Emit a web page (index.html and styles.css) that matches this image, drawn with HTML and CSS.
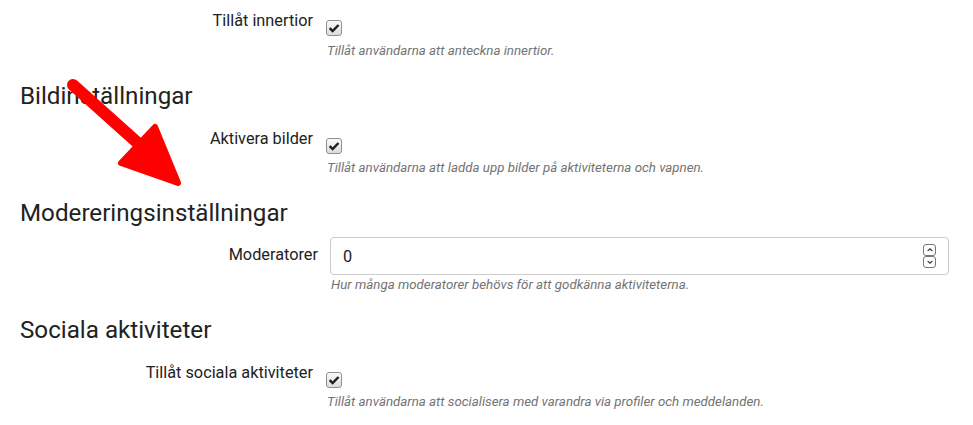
FILE: index.html
```html
<!DOCTYPE html>
<html lang="sv">
<head>
<meta charset="utf-8">
<link rel="stylesheet" href="styles.css">
</head>
<body>
<div class="page">
  <div class="row row-check first">
    <div class="label">Tillåt innertior</div>
    <div class="control">
      <span class="check"><svg viewBox="0 0 16 16" width="12" height="12"><path d="M2.2 8.2 L6.2 12 L14 4" fill="none" stroke="#1e1e1e" stroke-width="3.2"/></svg></span>
      <div class="help">Tillåt användarna att anteckna innertior.</div>
    </div>
  </div>

  <h2 class="heading">Bildinställningar</h2>
  <div class="row row-check">
    <div class="label">Aktivera bilder</div>
    <div class="control">
      <span class="check"><svg viewBox="0 0 16 16" width="12" height="12"><path d="M2.2 8.2 L6.2 12 L14 4" fill="none" stroke="#1e1e1e" stroke-width="3.2"/></svg></span>
      <div class="help">Tillåt användarna att ladda upp bilder på aktiviteterna och vapnen.</div>
    </div>
  </div>

  <h2 class="heading">Modereringsinställningar</h2>
  <div class="row row-input">
    <div class="label">Moderatorer</div>
    <div class="control">
      <div class="input">
        <span class="value">0</span>
        <span class="spin">
          <span class="spin-btn"><svg viewBox="0 0 10 10" width="8" height="8"><path d="M2 6.5 L5 3.5 L8 6.5" fill="none" stroke="#333" stroke-width="1.4"/></svg></span>
          <span class="spin-btn"><svg viewBox="0 0 10 10" width="8" height="8"><path d="M2 3.5 L5 6.5 L8 3.5" fill="none" stroke="#333" stroke-width="1.4"/></svg></span>
        </span>
      </div>
      <div class="help">Hur många moderatorer behövs för att godkänna aktiviteterna.</div>
    </div>
  </div>

  <h2 class="heading">Sociala aktiviteter</h2>
  <div class="row row-check">
    <div class="label">Tillåt sociala aktiviteter</div>
    <div class="control">
      <span class="check"><svg viewBox="0 0 16 16" width="12" height="12"><path d="M2.2 8.2 L6.2 12 L14 4" fill="none" stroke="#1e1e1e" stroke-width="3.2"/></svg></span>
      <div class="help">Tillåt användarna att socialisera med varandra via profiler och meddelanden.</div>
    </div>
  </div>

  <svg class="arrow" width="200" height="200" viewBox="0 0 200 200">
    <line x1="73" y1="83" x2="140" y2="143" stroke="#ff0000" stroke-width="12" stroke-linecap="round"/>
    <polygon points="155,125 178,181 121,161" fill="#ff0000" stroke="#ff0000" stroke-width="6" stroke-linejoin="round"/>
  </svg>
</div>
</body>
</html>
```
FILE: styles.css
```css
html, body {
  margin: 0;
  padding: 0;
  background: #ffffff;
}
body {
  font-family: Roboto, "Noto Sans", sans-serif;
  color: #222222;
  width: 973px;
  height: 425px;
  overflow: hidden;
}
.page {
  position: relative;
  padding: 0 24px 0 0;
}
.row {
  display: grid;
  grid-template-columns: 318px 1fr;
  column-gap: 8px;
}
.row.first {
  margin-top: 2px;
}
.row-check {
  padding-top: 7px;
}
.label {
  text-align: right;
  font-size: 16.3px;
  line-height: 24px;
  color: #222;
}
.row-check .label {
  padding-right: 5px;
}
.row-input .label {
  padding-top: 6px;
  padding-right: 0;
}
.row-input {
  column-gap: 12px;
}
.check {
  display: flex;
  align-items: center;
  justify-content: center;
  width: 14px;
  height: 14px;
  margin-top: 11px;
  border: 1px solid #8f8f8f;
  border-radius: 3px;
  background: linear-gradient(#fafafa, #dcdcdc);
}
.help {
  font-size: 13.3px;
  font-style: italic;
  color: #737373;
  line-height: 18px;
  margin-top: 5.5px;
}
.row-check .help {
  margin-left: 1px;
}
.row-input .help {
  margin-top: 0.5px;
  margin-left: 1px;
}
.heading {
  margin: 20px 0 8px;
  padding-left: 20px;
  font-size: 24.2px;
  font-weight: 400;
  line-height: 32px;
  color: #222;
}
.input {
  display: flex;
  align-items: center;
  justify-content: space-between;
  height: 36px;
  border: 1px solid #cccccc;
  border-radius: 4px;
  padding: 0 12px;
  box-sizing: content-box;
}
.value {
  font-size: 16.3px;
  color: #222;
}
.spin {
  display: flex;
  flex-direction: column;
}
.spin-btn {
  display: flex;
  align-items: center;
  justify-content: center;
  width: 11px;
  height: 10px;
  border: 1px solid #767676;
  border-radius: 3px;
}
.arrow {
  position: absolute;
  left: 0;
  top: 0;
}
```
